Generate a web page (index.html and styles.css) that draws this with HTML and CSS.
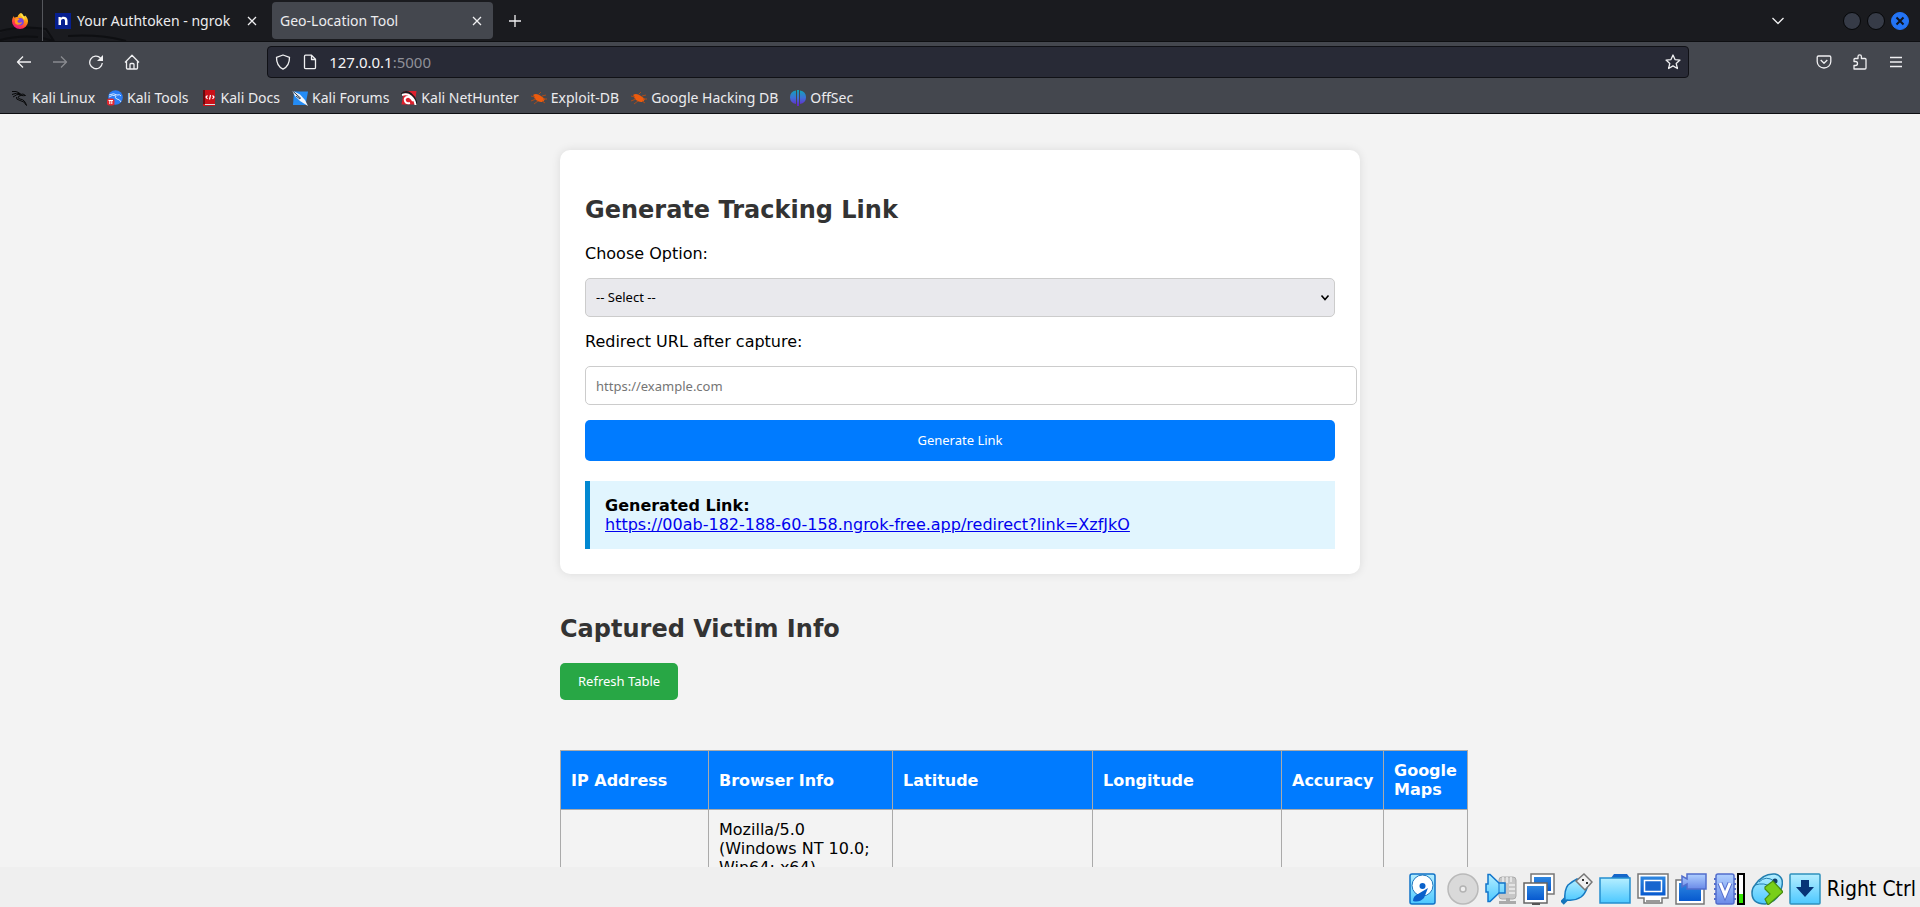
FILE: index.html
```html
<!DOCTYPE html>
<html lang="en">
<head>
<meta charset="utf-8">
<title>Geo-Location Tool</title>
<link rel="stylesheet" href="styles.css">
</head>
<body>
<header class="browser">
  <div class="tabstrip">
    <svg class="dragon" width="160" height="41" viewBox="0 0 160 41" fill="none"><path d="M0 33Q20 26 42 29L54 41H0Z" fill="#15161a"/><path d="M0 31Q22 25 46 29L54 41M0 40Q18 35 38 37M42 38l12 3M68 36Q100 34 126 41" stroke="#0e0f12" stroke-width="2"/></svg>
    <div class="pinned">
      <svg width="16" height="16" viewBox="0 0 16 16"><defs><linearGradient id="ff" x1=".8" y1="0" x2=".3" y2="1"><stop offset="0" stop-color="#fff44f"/><stop offset=".4" stop-color="#ff980e"/><stop offset=".75" stop-color="#ff3647"/><stop offset="1" stop-color="#e31587"/></linearGradient></defs><path d="M9 0c2 1 2.500 2.500 2.700 3.500 1-.2 1.400-.6 1.500-1C15 4 16 6.300 16 8.500A8 7.500 0 0 1 0 8.500C0 6.500.5 4.500 2 3c0 1 .2 1.300.5 1.700C3.300 4 4.500 3.800 5.500 4 6 2 7.500.5 9 0Z" fill="url(#ff)"/><circle cx="8" cy="8.700" r="3.800" fill="#7542e5"/><path d="M3 6c2-1.500 3-.5 4.500 0-.5 1.500-2.500 1-2 2.500C6 10.500 9 9.500 10 9c0 3-5.500 4-7 1Z" fill="#ff9a1f"/><path d="M9 1c-.5 2 2.700 3.500 3 6 1-1 .5-3-.5-4Z" fill="#ffe847"/></svg>
    </div>
    <div class="tab">
      <svg width="16" height="16" viewBox="0 0 16 16"><path d="M0 0h16v16H0z" fill="#061f8f"/><path d="M3.500 4h2.300v1C6.500 4.200 7.300 3.800 8.500 3.800c2.500 0 4 1.400 4 4V12H10V8c0-1.400-.7-2-1.900-2S6 6.700 6 8v4H3.500Z" fill="#fff"/></svg>
      <span class="tab-title">Your Authtoken - ngrok</span>
      <button class="tab-close" aria-label="Close tab"><svg width="10" height="10" viewBox="0 0 10 10"><path d="M1 1l8 8M9 1L1 9"/></svg></button>
    </div>
    <div class="tab active">
      <span class="tab-title">Geo-Location Tool</span>
      <button class="tab-close" aria-label="Close tab"><svg width="10" height="10" viewBox="0 0 10 10"><path d="M1 1l8 8M9 1L1 9"/></svg></button>
    </div>
    <button class="tool new-tab" aria-label="New tab"><svg width="12" height="12" viewBox="0 0 12 12"><path d="M6 0v12M0 6h12"/></svg></button>
    <div class="window-buttons">
      <button class="tool" aria-label="List all tabs"><svg width="14" height="8" viewBox="0 0 14 8"><path d="M1.500 1L7 6.500 12.500 1"/></svg></button>
      <button class="round" aria-label="Minimize"></button>
      <button class="round" aria-label="Maximize"></button>
      <button class="round close" aria-label="Close"><svg width="10" height="10" viewBox="0 0 10 10"><path d="M1.500 1.500l7 7M8.500 1.500l-7 7"/></svg></button>
    </div>
  </div>
  <nav class="toolbar" aria-label="Navigation">
    <button class="tool" aria-label="Back"><svg width="16" height="16" viewBox="0 0 16 16"><path d="M15 8H1.500M7 2.500L1.500 8 7 13.500"/></svg></button>
    <button class="tool dim" aria-label="Forward"><svg width="16" height="16" viewBox="0 0 16 16"><path d="M1 8h13.500M9 2.500L14.500 8 9 13.500"/></svg></button>
    <button class="tool" aria-label="Reload"><svg width="16" height="16" viewBox="0 0 16 16"><path d="M12.500 4A6.300 6.300 0 1 0 14.300 9"/><path d="M15 1v6H9Z" fill="#f0f0f2" stroke="none"/></svg></button>
    <button class="tool" aria-label="Home"><svg width="16" height="16" viewBox="0 0 16 16"><path d="M1 8.500L8 1.300 15 8.500M2.500 7.500V14q0 1 1 1h9q1 0 1-1V7.500M6 15v-4.500q0-1 1-1h2q1 0 1 1V15"/></svg></button>
    <div class="spring"></div>
    <div class="urlbar">
      <svg width="16" height="16" viewBox="0 0 16 16"><path d="M8 1L14.500 3.300C14.600 9 12.500 13 8 15.200 3.500 13 1.400 9 1.500 3.300Z"/></svg>
      <svg width="16" height="16" viewBox="0 0 16 16"><path d="M3.500 1.200h6l4 4V13.500q0 1.200-1.200 1.200H3.700q-1.200 0-1.200-1.200V2.200q0-1 1-1ZM9.500 1.500v4h4"/></svg>
      <span class="address">127.0.0.1<span class="port">:5000</span></span>
      <button class="star" aria-label="Bookmark this page"><svg width="16" height="16" viewBox="0 0 16 16"><path d="M8 1l2 4.600 5 .5-3.800 3.300 1.200 5.100L8 11.900l-4.400 2.600 1.200-5.100L1 6.100l5-.5Z"/></svg></button>
    </div>
    <div class="spring"></div>
    <button class="tool" aria-label="Save to Pocket"><svg width="16" height="16" viewBox="0 0 16 16"><path d="M2.500 2h11q1.300 0 1.300 1.300V7.500a6.800 6.500 0 0 1-13.600 0V3.300Q1.200 2 2.500 2ZM4.700 6L8 9.200 11.300 6"/></svg></button>
    <button class="tool" aria-label="Extensions"><svg width="16" height="16" viewBox="0 0 16 16"><path d="M2 15V11.500h1.500a1.800 1.800 0 0 0 0-4H2V5.500q0-1 1-1H6V2.500a1.700 1.700 0 0 1 3.400 0V4.500H13q1 0 1 1V14q0 1-1 1Z"/></svg></button>
    <button class="tool" aria-label="Menu"><svg width="16" height="16" viewBox="0 0 16 16"><path d="M2 3.500h12M2 8h12M2 12.500h12"/></svg></button>
  </nav>
  <nav class="bookmarks" aria-label="Bookmarks">
    <a href="#"><svg width="16" height="16" viewBox="0 0 16 16"><path d="M0 1.500Q5 .5 8 3.500M0 4.500Q5 2 9 4M1 7Q5 3.500 8.500 4.500Q11 3 13.500 5.500L11.500 5.700Q9 5 7 6Q4.500 8 8 9Q13 9.500 14.500 15.500Q12.500 11 8 10.500Q3.500 9.500 4.500 7" stroke="#08090a" stroke-width="1" fill="none"/></svg>Kali Linux</a>
    <a href="#"><svg width="16" height="16" viewBox="0 0 16 16"><circle cx="8.500" cy="7.500" r="7.300" fill="#2a7cf5"/><path d="M2 5q5-2.500 8 0 3-1 4 1M2 7q4-3 7-1-2 2 1 3 3 .5 4 3" stroke="#cfe6ff" fill="none"/><rect y="8.500" width="7.500" height="7" rx="2.500" fill="#e22730"/><path d="M1.500 10.500h4.500M2.800 10.500v3.500M4.800 10.500v3.500" stroke="#fff"/></svg>Kali Tools</a>
    <a href="#"><svg width="16" height="16" viewBox="0 0 16 16"><path d="M2 0h12v14H4v1h10v1H2Z" fill="#c91118"/><path d="M2 0h2v14H2Z" fill="#6c090d"/><path d="M4 14h10v1H4z" fill="#ddd"/><path d="M6.500 5.500L5 7l1.500 2M11.500 5.500L13 7l-1.500 2M9.500 5L8.500 9.500" stroke="#fff" stroke-width="1.200" fill="none"/></svg>Kali Docs</a>
    <a href="#"><svg width="16" height="16" viewBox="0 0 16 16"><path d="M2 1.500h14L13.500 15H1Z" fill="#248cf5"/><path d="M0 .5l8 4 5 5.500 3 6-8-5L3 6Z" fill="#f4f7fb"/><path d="M0 .5l9 8M4 6l4 3" stroke="#26364b" fill="none"/></svg>Kali Forums</a>
    <a href="#"><svg width="16" height="16" viewBox="0 0 16 16"><path d="M3 1h12.500L13.500 14.500H.5Z" fill="#dc202d"/><path d="M0 4.500Q5 0 10 4q5 4 5.500 10.500" stroke="#191a1e" stroke-width="2" fill="none"/><path d="M1 5Q6 3 10 6.500q4 3.500 4.500 8.500M12 11Q9 6 6 7T4 11t5 2" stroke="#fff" stroke-width="2" fill="none"/></svg>Kali NetHunter</a>
    <a href="#"><svg width="16" height="16" viewBox="0 0 16 16"><path d="M2.500 4.500Q6 3 10 6L14 9 12.500 11.500Q9 13 5 10Q2 7 2.500 4.500Z" fill="#ed5b0d"/><path d="M0 6l4 1M0 11l5-2M3 14l4-3M8 4l2-2M11 6l4-1M12 9h4M11 11l3 2" stroke="#a94c1c" fill="none"/></svg>Exploit-DB</a>
    <a href="#"><svg width="16" height="16" viewBox="0 0 16 16"><path d="M2.500 4.500Q6 3 10 6L14 9 12.500 11.500Q9 13 5 10Q2 7 2.500 4.500Z" fill="#ed5b0d"/><path d="M0 6l4 1M0 11l5-2M3 14l4-3M8 4l2-2M11 6l4-1M12 9h4M11 11l3 2" stroke="#a94c1c" fill="none"/></svg>Google Hacking DB</a>
    <a href="#"><svg width="16" height="16" viewBox="0 0 16 16"><defs><linearGradient id="os" x1="0" y1="0" x2="0" y2="1"><stop offset="0" stop-color="#10a5b8"/><stop offset=".5" stop-color="#3f6fd8"/><stop offset="1" stop-color="#6a1fc8"/></linearGradient></defs><path d="M6 .5V14Q0 13 0 7.300T6 .5ZM7 0h2v16H7ZM10 .5Q16 1.500 16 7.300T10 14Z" fill="url(#os)"/></svg>OffSec</a>
  </nav>
</header>

<main class="page">
  <div class="container">
    <form class="card">
      <h2>Generate Tracking Link</h2>
      <label for="option">Choose Option:</label>
      <div class="select-wrap">
        <select id="option"><option>-- Select --</option></select>
        <svg class="arrow" width="10" height="8" viewBox="0 0 10 8"><path d="M1.500 1.500L5 5.500 8.500 1.500"/></svg>
      </div>
      <label for="redirect">Redirect URL after capture:</label>
      <input id="redirect" type="url" placeholder="https://example.com">
      <button class="primary" type="button">Generate Link</button>
      <div class="result">
        <strong>Generated Link:</strong><br>
        <a href="#">https://00ab-182-188-60-158.ngrok-free.app/redirect?link=XzfJkO</a>
      </div>
    </form>
    <h2>Captured Victim Info</h2>
    <button class="refresh" type="button">Refresh Table</button>
    <table>
      <colgroup><col class="c-ip"><col class="c-browser"><col class="c-lat"><col class="c-lon"><col class="c-acc"><col class="c-map"></colgroup>
      <thead><tr><th>IP Address</th><th>Browser Info</th><th>Latitude</th><th>Longitude</th><th>Accuracy</th><th>Google Maps</th></tr></thead>
      <tbody><tr><td></td><td>Mozilla/5.0 (Windows NT 10.0; Win64; x64)</td><td></td><td></td><td></td><td></td></tr></tbody>
    </table>
  </div>
</main>

<footer class="statusbar">
  <svg width="32" height="32" viewBox="3 0 32 32"><defs><linearGradient id="sky" x1="0" y1="0" x2="0" y2="1"><stop offset="0" stop-color="#b5eeff"/><stop offset="1" stop-color="#4cc8ff"/></linearGradient><linearGradient id="blue" x1="0" y1="0" x2="0" y2="1"><stop offset="0" stop-color="#2d86e0"/><stop offset="1" stop-color="#0759cf"/></linearGradient><linearGradient id="violet" x1="0" y1="0" x2="0" y2="1"><stop offset="0" stop-color="#b0d0ff"/><stop offset="1" stop-color="#6a8ae8"/></linearGradient></defs><rect x="4" y="1" width="25" height="30" rx="2" fill="url(#sky)" stroke="#1173c7" stroke-width="1.500"/><circle cx="16.500" cy="12.500" r="10.500" fill="#fff" stroke="#2377bd"/><circle cx="16.500" cy="13" r="3" fill="#0961ca"/><path d="M22 15L18 25Q13 30 7 28 7 23 12 21Z" fill="#0b60cb"/></svg>
  <svg width="32" height="32" viewBox="0 0 32 32"><circle cx="16" cy="16" r="15" fill="#d9d9d9" stroke="#b9b9b9" stroke-width="1.500"/><circle cx="16" cy="16" r="3" fill="#eee" stroke="#b3b3b3" stroke-width="1.500"/></svg>
  <svg width="32" height="32" viewBox="0 0 32 32"><rect x="14" y="4" width="17" height="22" rx="3" fill="#c7c7c7" stroke="#aaa"/><path d="M18 4v5M22 4v6M26 4v5M24 12h6M24 16h6M24 20h6" stroke="#eee" stroke-width="1.500"/><path d="M21 25h4v3h6v3H14v-3h7Z" fill="#aaa"/><path d="M3 1.500h2L14 10h6v10h-6L5 28.500H3V19H1V11h2Z" fill="url(#sky)" stroke="#1275cb" stroke-width="1.500"/><path d="M14 10v10" stroke="#1275cb"/></svg>
  <svg width="32" height="32" viewBox="0 0 32 32"><rect x="8" y="1" width="23" height="20" fill="#fff" stroke="#777" stroke-width="1.500"/><rect x="11" y="4" width="17" height="14" fill="url(#blue)"/><rect x="1" y="10" width="23" height="20" fill="#fff" stroke="#666" stroke-width="1.500"/><rect x="4" y="13" width="17" height="14" fill="url(#blue)"/><path d="M9 31h8" stroke="#555" stroke-width="2"/></svg>
  <svg width="32" height="32" viewBox="0 0 32 32"><path d="M1 30L5 26" stroke="#1674b9" stroke-width="5"/><path d="M4 28q-1-11 3-16 5-4 9-6l10 9q-2 6-6 9-6 4-14 3Z" fill="url(#sky)" stroke="#1578c1" stroke-width="1.500"/><path d="M23 1l8 8-7 8-9-9Z" fill="#f0f0f0" stroke="#777" stroke-width="1.500"/><path d="M21 6h2v2h-2zM25 9h2v2h-2z" fill="#333"/></svg>
  <svg width="32" height="32" viewBox="0 0 32 32"><path d="M12 5l3-4h13l3 4Z" fill="#1667c9"/><path d="M1 5h30v25H1Z" fill="url(#sky)" stroke="#258ed0" stroke-width="1.500"/></svg>
  <svg width="32" height="32" viewBox="0 0 32 32"><path d="M1 1h30v24H25v5H7v-5H1Z" fill="#fff" stroke="#777" stroke-width="1.500"/><rect x="3.500" y="3.500" width="25" height="19" fill="url(#blue)"/><rect x="7.500" y="7.500" width="17" height="11" fill="#1765cf" stroke="#fff" stroke-width="1.500"/><path d="M9 28h14" stroke="#777" stroke-width="1.500"/></svg>
  <svg width="32" height="32" viewBox="0 0 32 32"><rect x="1" y="7" width="28" height="24" fill="#fff" stroke="#777" stroke-width="1.500"/><rect x="4" y="10" width="22" height="18" fill="url(#blue)"/><path d="M12 1h19v15H12V11l-5 3V3l5 3Z" fill="url(#violet)" stroke="#526dcc" stroke-width="1.500"/></svg>
  <svg width="32" height="32" viewBox="0 0 32 32"><path d="M1 6h22M1 11h22M1 16h22M1 21h22M1 26h22" stroke="#5870ce" stroke-width="2"/><rect x="3" y="1" width="18" height="30" rx="2" fill="url(#violet)" stroke="#536dcb" stroke-width="1.500"/><path d="M7 10l5 12 5-12" stroke="#5870ce" stroke-width="5" fill="none"/><path d="M7 10l5 12 5-12" stroke="#fff" stroke-width="3" fill="none"/><rect x="24" y="0" width="8" height="32" fill="#000"/><path d="M26 2h4v19h-4Z" fill="#fff"/><path d="M26 21h4v9h-4Z" fill="#34e600"/></svg>
  <svg width="32" height="32" viewBox="0 0 32 32"><path d="M4 12Q12 0 24 1q9 2 7 12Q28 29 14 31 1 31 1 20q0-5 3-8Z" fill="url(#sky)" stroke="#247fb0" stroke-width="1.500"/><path d="M4 12Q14 9 19 14M8 9Q15 2 23 8" stroke="#247fb0" fill="none"/><circle cx="24" cy="8" r="2.500" fill="#113f67"/><path d="M14 14l8-6 10 11-15 13-3-6 5-5-5-5Z" fill="#78cf18" stroke="#478c12" stroke-width="1.200"/></svg>
  <svg width="32" height="32" viewBox="0 0 32 32"><rect x="1" y="1" width="30" height="30" rx="1" fill="url(#sky)" stroke="#2f91bd" stroke-width="1.500"/><path d="M12 7h8v7h5l-9 10-9-10h5Z" fill="#063477"/></svg>
  <span class="host-key">Right Ctrl</span>
</footer>
</body>
</html>
```
FILE: styles.css
```css
* { box-sizing: border-box; }

body {
  margin: 0;
  height: 100vh;
  display: flex;
  flex-direction: column;
  overflow: hidden;
  background: #f3f3f3;
  color: #000;
  font: 16px/19px "DejaVu Sans", sans-serif;
}

button, input, select { font: 13px/17px "Noto Sans", sans-serif; }
button { border: 0; padding: 0; background: none; color: inherit; }
svg { flex: none; }

/* Browser chrome */
.browser {
  flex: none;
  background: #44474e;
  color: #ececee;
  font: 14px/20px "Noto Sans", sans-serif;
  border-bottom: 1px solid #0c0d10;
}
.browser button svg, .urlbar svg {
  fill: none;
  stroke: #f0f0f2;
  stroke-width: 1.3;
  stroke-linejoin: round;
}

.tabstrip {
  position: relative;
  display: flex;
  align-items: center;
  height: 42px;
  background: #1a1b1f;
  border-bottom: 1px solid #0e0f12;
}
.dragon { position: absolute; left: 0; top: 0; }
.pinned {
  position: relative;
  display: flex;
  align-items: center;
  justify-content: center;
  width: 43px;
  height: 41px;
  padding-right: 3px;
  border-right: 1px solid #55575c;
}
.tab {
  position: relative;
  display: flex;
  align-items: center;
  gap: 6px;
  width: 221px;
  height: 37px;
  margin-left: 4px;
  padding: 0 8px;
  border-radius: 4px;
}
.tab.active { background: #44474e; }
.tab-title { flex: 1; white-space: nowrap; }
.tab-close { display: flex; padding: 3px; }
.tool {
  display: flex;
  align-items: center;
  justify-content: center;
  width: 36px;
  height: 36px;
}
.new-tab { margin-left: 4px; }
.tool.dim { opacity: .4; }
.window-buttons { display: flex; align-items: center; gap: 6px; margin-left: auto; padding-right: 11px; }
.window-buttons .tool { margin-right: 41px; }
.round {
  display: flex;
  align-items: center;
  justify-content: center;
  width: 18px;
  height: 18px;
  border: 1px solid #050608;
  border-radius: 50%;
  background: #363b47;
}
.round.close { border-color: #2374f5; background: #2374f5; }
.browser .round svg { stroke: #10141d; stroke-width: 2; }

.toolbar { display: flex; align-items: center; height: 40px; padding: 0 6px; }
.spring { flex: 117 1 0; }
.urlbar {
  flex: 1404 1 0;
  display: flex;
  align-items: center;
  gap: 11px;
  height: 32px;
  padding: 0 7px;
  border: 1px solid #101116;
  border-radius: 4px;
  background: #282a36;
  color: #f4f4f6;
}
.address { flex: 1; font-size: 15px; }
.port { color: #8f9098; }
.star { display: flex; }

.bookmarks { display: flex; gap: 12px; height: 31px; padding: 0 12px; align-items: center; }
.bookmarks a {
  display: flex;
  align-items: center;
  gap: 4px;
  color: inherit;
  text-decoration: none;
  white-space: nowrap;
}

/* Page */
.page { flex: 1; min-height: 0; overflow: hidden; padding-top: 36px; }
.container { max-width: 800px; margin: 0 auto; }
.card {
  margin-bottom: 40px;
  padding: 25px;
  border-radius: 10px;
  background: #fff;
  box-shadow: 0 0 10px rgba(0, 0, 0, .1);
}
h2 { margin: 20px 0 19px; color: #333; font-size: 24px; line-height: 30px; }
label { display: block; margin-bottom: 15px; }
.select-wrap { position: relative; margin-bottom: 15px; }
select, input {
  display: block;
  height: 39px;
  border: 1px solid #ccc;
  border-radius: 5px;
  padding: 10px;
}
select { appearance: none; width: 100%; background: #e9e9ed; color: #000; }
.arrow { position: absolute; right: 5px; top: 16px; fill: none; stroke: #000; stroke-width: 1.6; }
input { width: calc(100% + 22px); margin-bottom: 15px; background: #fff; }
input::placeholder { color: #757575; }
.primary {
  display: block;
  width: 100%;
  padding: 12px;
  border-radius: 5px;
  background: #007bff;
  color: #fff;
}
.result {
  margin-top: 20px;
  padding: 15px;
  border-left: 5px solid #0288d1;
  background: #e1f5fe;
}
.result a { color: #00e; }
.refresh {
  display: block;
  margin-bottom: 50px;
  padding: 10px 18px;
  border-radius: 5px;
  background: #28a745;
  color: #fff;
}
table { table-layout: fixed; width: 908px; border-collapse: collapse; }
.c-ip { width: 148px; }
.c-browser { width: 184px; }
.c-lat { width: 200px; }
.c-lon { width: 189px; }
.c-acc { width: 102px; }
.c-map { width: 84px; }
th, td { padding: 10px; border: 1px solid #aaa; text-align: left; }
th { background: #007bff; color: #fff; }

/* Virtual machine status bar */
.statusbar {
  flex: none;
  display: flex;
  align-items: center;
  justify-content: flex-end;
  gap: 6px;
  height: 40px;
  padding: 4px 4px 0 0;
  background: #efefef;
}
.host-key { font: 21px/26px "DejaVu Sans Condensed", "DejaVu Sans", sans-serif; }
```
